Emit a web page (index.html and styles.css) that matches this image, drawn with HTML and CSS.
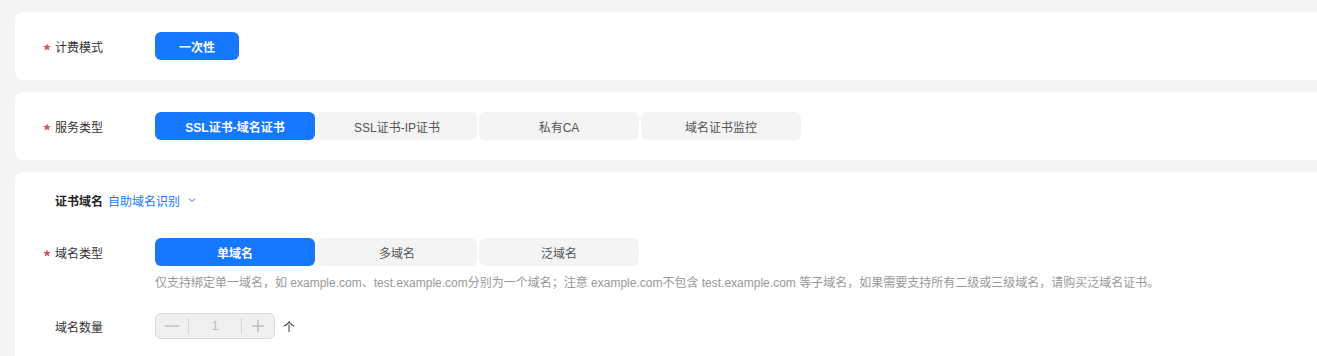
FILE: index.html
```html
<!DOCTYPE html>
<html lang="zh-CN">
<head>
<meta charset="utf-8">
<link rel="stylesheet" href="styles.css">
</head>
<body>
<div class="page">
  <section class="card card-short">
    <div class="row">
      <div class="label"><span class="star"><svg width="8" height="8" viewBox="0 0 10 10"><polygon points="5,0.3 6.2,3.6 9.8,3.7 7,5.9 8,9.5 5,7.4 2,9.5 3,5.9 0.2,3.7 3.8,3.6" fill="#e5484d"/></svg></span>计费模式</div>
      <div class="options">
        <button class="opt opt-active opt-narrow">一次性</button>
      </div>
    </div>
  </section>
  <section class="card card-short">
    <div class="row">
      <div class="label"><span class="star"><svg width="8" height="8" viewBox="0 0 10 10"><polygon points="5,0.3 6.2,3.6 9.8,3.7 7,5.9 8,9.5 5,7.4 2,9.5 3,5.9 0.2,3.7 3.8,3.6" fill="#e5484d"/></svg></span>服务类型</div>
      <div class="options">
        <button class="opt opt-active">SSL证书-域名证书</button>
        <button class="opt">SSL证书-IP证书</button>
        <button class="opt">私有CA</button>
        <button class="opt">域名证书监控</button>
      </div>
    </div>
  </section>
  <section class="card card-tall">
    <div class="head">
      <span class="head-title">证书域名</span>
      <span class="head-link">自助域名识别</span>
      <svg class="chev" width="8" height="6" viewBox="0 0 8 6"><path d="M1 1.5 L4 4.5 L7 1.5" fill="none" stroke="#1677ff" stroke-width="1"/></svg>
    </div>
    <div class="row row-type">
      <div class="label"><span class="star"><svg width="8" height="8" viewBox="0 0 10 10"><polygon points="5,0.3 6.2,3.6 9.8,3.7 7,5.9 8,9.5 5,7.4 2,9.5 3,5.9 0.2,3.7 3.8,3.6" fill="#e5484d"/></svg></span>域名类型</div>
      <div class="field">
        <div class="options">
          <button class="opt opt-active">单域名</button>
          <button class="opt">多域名</button>
          <button class="opt">泛域名</button>
        </div>
        <p class="hint">仅支持绑定单一域名，如 example.com、test.example.com分别为一个域名；注意 example.com不包含 test.example.com 等子域名，如果需要支持所有二级或三级域名，请购买泛域名证书。</p>
      </div>
    </div>
    <div class="row row-count">
      <div class="label"><span class="star"></span>域名数量</div>
      <div class="stepper-wrap">
        <div class="stepper">
          <span class="step-btn">
            <svg width="14" height="14" viewBox="0 0 14 14"><path d="M0 7 H14" stroke="#bdbdbd" stroke-width="1.4"/></svg>
          </span>
          <span class="step-val">1</span>
          <span class="step-btn">
            <svg width="14" height="14" viewBox="0 0 14 14"><path d="M1 7 H13 M7 1 V13" stroke="#bdbdbd" stroke-width="1.4"/></svg>
          </span>
        </div>
        <span class="unit">个</span>
      </div>
    </div>
  </section>
</div>
</body>
</html>
```

FILE: styles.css
```css
html, body {
  margin: 0;
  padding: 0;
  background: #f4f4f4;
  overflow: hidden;
}
body {
  font-family: "Liberation Sans", "Noto Sans CJK SC", sans-serif;
  font-size: 12px;
  color: #333;
}
.page {
  padding: 12px 0 0 15px;
  display: flex;
  flex-direction: column;
  gap: 12px;
}
.card {
  background: #fff;
  border-radius: 8px;
  margin-right: -40px;
  padding-left: 28px;
  box-sizing: border-box;
}
.card-short {
  height: 68px;
  padding-top: 20px;
}
.card-tall {
  height: 200px;
  padding-top: 20px;
}
.row {
  display: flex;
  align-items: flex-start;
}
.label {
  width: 112px;
  flex: none;
  height: 28px;
  display: flex;
  align-items: center;
  color: #333;
  font-size: 12px;
}
.star {
  width: 12px;
  height: 8px;
  display: flex;
  align-items: center;
  margin-top: 2px;
}
.options {
  display: flex;
  gap: 2px;
}
.opt {
  width: 160px;
  height: 28px;
  border: none;
  border-radius: 6px;
  background: #f4f4f4;
  color: #555;
  font-family: "Liberation Sans", "Noto Sans CJK SC", sans-serif;
  font-size: 12px;
  padding: 0;
  cursor: pointer;
}
.opt-active {
  background: #1677ff;
  color: #fff;
  font-weight: bold;
}
.opt-narrow {
  width: 84px;
}
.head {
  display: flex;
  align-items: center;
  height: 16px;
  margin-left: 12px;
  gap: 5px;
}
.head-title {
  font-weight: bold;
  color: #222;
}
.head-link {
  color: #1677ff;
}
.chev {
  margin-left: 3px;
}
.row-type {
  margin-top: 30px;
}
.hint {
  margin: 10px 0 0;
  color: #999;
  font-size: 12px;
  line-height: 14px;
  white-space: nowrap;
}
.row-count {
  margin-top: 22px;
}
.stepper-wrap {
  display: flex;
  align-items: center;
  gap: 8px;
  height: 28px;
}
.stepper {
  width: 120px;
  height: 26px;
  box-sizing: border-box;
  border: 1px solid #dcdcdc;
  border-radius: 6px;
  background: #f0f0f0;
  display: flex;
  align-items: center;
}
.step-btn {
  width: 32px;
  height: 16px;
  display: flex;
  align-items: center;
  justify-content: center;
}
.step-btn:first-child {
  border-right: 1px solid #d6d6d6;
}
.step-btn:last-child {
  border-left: 1px solid #d6d6d6;
}
.step-val {
  flex: 1;
  text-align: center;
  color: #bbb;
  font-size: 12px;
}
.unit {
  color: #333;
  font-size: 12px;
}
```
